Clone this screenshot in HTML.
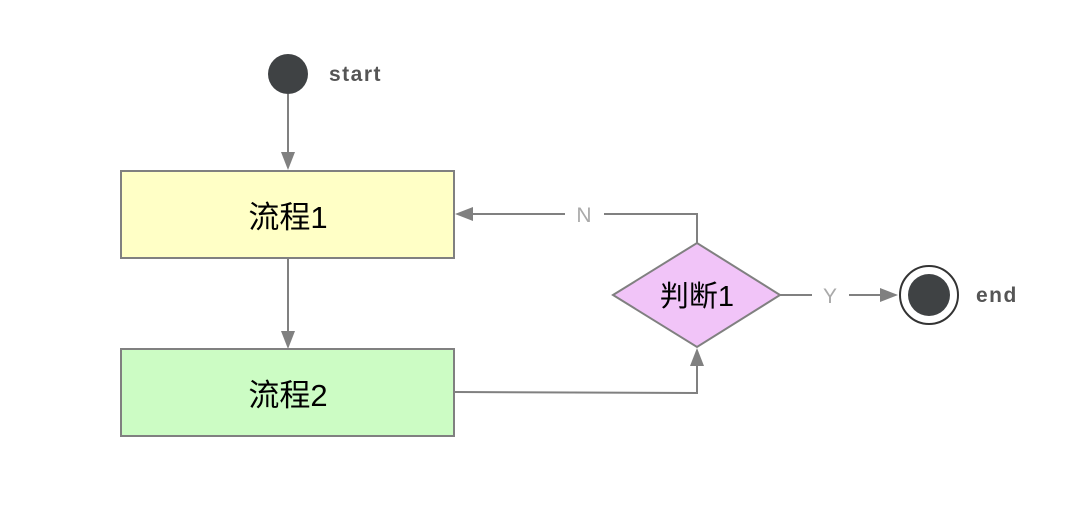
<!DOCTYPE html><html><head><meta charset="utf-8"><style>body{margin:0;background:#fff}</style></head><body>
<svg width="1090" height="504" xmlns="http://www.w3.org/2000/svg">
<g stroke="#808080" stroke-width="2" fill="none">
<line x1="288" y1="94" x2="288" y2="154"/>
<line x1="288" y1="258" x2="288" y2="332"/>
<polyline points="697,243 697,214 604,214"/>
<line x1="565" y1="214" x2="472" y2="214"/>
<line x1="780" y1="295" x2="812" y2="295"/>
<line x1="849" y1="295" x2="882" y2="295"/>
<polyline points="455,392 697,393 697,365"/>
</g>
<g fill="#808080">
<polygon points="281,152 295,152 288,170"/>
<polygon points="281,331 295,331 288,349"/>
<polygon points="473,207 473,221 455,214"/>
<polygon points="880,288 880,302 898,295"/>
<polygon points="690,366 704,366 697,348"/>
</g>
<circle cx="288" cy="74" r="20" fill="#3f4244"/>
<rect x="121" y="171" width="333" height="87" fill="#ffffc6" stroke="#808080" stroke-width="2"/>
<rect x="121" y="349" width="333" height="87" fill="#ccfcc4" stroke="#808080" stroke-width="2"/>
<polygon points="613,295 697,243 780,295 697,347" fill="#f1c4f8" stroke="#808080" stroke-width="2"/>
<circle cx="929" cy="295" r="29" fill="#fff" stroke="#333" stroke-width="2"/>
<circle cx="929" cy="295" r="21" fill="#3f4244"/>
<g font-family="Liberation Sans, Noto Sans CJK SC, sans-serif">
<text x="329" y="81" font-size="21" font-weight="bold" fill="#555" letter-spacing="1.5">start</text>
<text x="976" y="302" font-size="21" font-weight="bold" fill="#555" letter-spacing="1.5">end</text>
<text x="288" y="228" font-size="31" text-anchor="middle" fill="#000">流程1</text>
<text x="288" y="406" font-size="31" text-anchor="middle" fill="#000">流程2</text>
<text x="697" y="306" font-size="29" text-anchor="middle" fill="#000">判断1</text>
<text x="584" y="222" font-size="21" text-anchor="middle" fill="#aaa">N</text>
<text x="830" y="303" font-size="21" text-anchor="middle" fill="#aaa">Y</text>
</g>
</svg></body></html>
